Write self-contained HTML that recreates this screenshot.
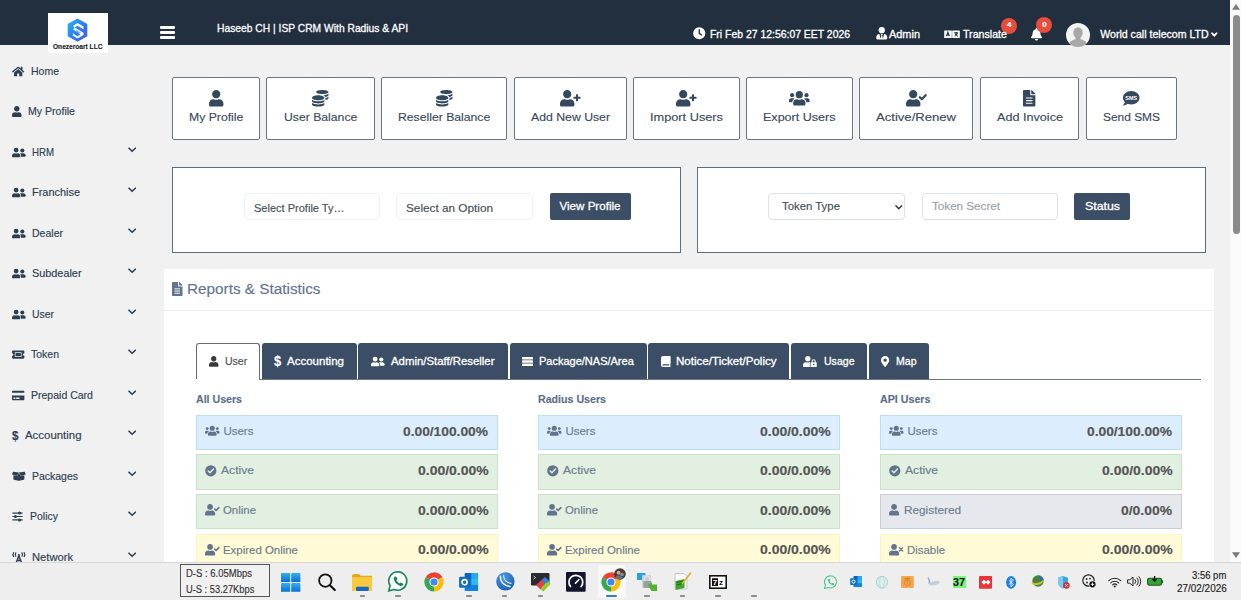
<!DOCTYPE html>
<html><head><meta charset="utf-8"><title>ISP CRM With Radius &amp; API</title>
<style>
*{box-sizing:border-box;margin:0;padding:0}
html,body{width:1241px;height:600px;overflow:hidden;background:#f1f1f1;font-family:"Liberation Sans",sans-serif;color:#2c3e50}
body{position:relative}
.t{position:absolute;white-space:nowrap;transform-origin:0 50%;display:block;-webkit-text-stroke:0.15px currentColor}
.b{position:absolute}
svg{position:absolute;overflow:visible}
.qb{position:absolute;top:77px;height:63px;background:#fff;border:1px solid #6b7581;border-radius:2px}
.panel{position:absolute;top:167px;height:86px;background:#fff;border:1px solid #626d7a}
.inp{position:absolute;top:193px;height:27px;background:#fff;border:1px solid #eff0f2;border-radius:4px}
.btn{position:absolute;top:193px;height:27px;background:#3b4e65;border-radius:2px}
.tab{position:absolute;top:343px;height:36.3px;background:#3b4e65;border-radius:3px 3px 0 0}
.row{position:absolute;width:302px;height:35.4px;border:1px solid}
.r1{background:#dcedfd;border-color:#bcdcfa}
.r2{background:#e1f0e1;border-color:#c9e3c9}
.r3{background:#fffbd7;border-color:#fdf3c0}
.r4{background:#e5e9ee;border-color:#c9ced6}
</style></head><body>
<div class="b" style="left:0px;top:0px;width:1230px;height:45px;background:#222f3f;"></div>
<div class="b" style="left:48px;top:12.8px;width:60.3px;height:40.2px;background:#fff;"></div>
<svg style="left:67.4px;top:18px" width="21" height="24.2" viewBox="0 0 44 52"><defs><linearGradient id="lg" x1="0" y1="0" x2="1" y2="1"><stop offset="0" stop-color="#25b4f8"/><stop offset=".55" stop-color="#2b7bf2"/><stop offset="1" stop-color="#4454ee"/></linearGradient></defs><path d="M22 1L43 13v26L22 51 1 39V13z" fill="url(#lg)"/><path d="M12 17l10-6 13 7.500v5.500l-13-7.500-5 3v2.500z" fill="#fff"/><path d="M12 24l5-3 18 10.500v5l-13 7.500-10-6v-5l10 6 6-3.500z" fill="#fff" opacity=".95"/><path d="M19 25.500l10 5.800-4 2.300-6-3.500z" fill="#2b6cf0" opacity=".55"/></svg>
<div class="b" style="left:160px;top:26.3px;width:14.5px;height:3px;background:#fff;border-radius:1px;"></div>
<div class="b" style="left:160px;top:31.3px;width:14.5px;height:3px;background:#fff;border-radius:1px;"></div>
<div class="b" style="left:160px;top:36.3px;width:14.5px;height:3px;background:#fff;border-radius:1px;"></div>
<svg style="left:693px;top:27.2px" width="12.5" height="12.5" viewBox="0 0 512 512" preserveAspectRatio="xMidYMid meet"><circle cx="256" cy="256" r="248" fill="#ffffff"/><path fill="none" stroke="#222f3f" stroke-width="56" stroke-linecap="round" stroke-linejoin="round" d="M256 110v150l90 66"/></svg>
<svg style="left:875.5px;top:27px" width="11.5" height="12.5" viewBox="0 0 448 512" preserveAspectRatio="xMidYMid meet"><circle cx="224" cy="128" r="128" fill="#ffffff"/><path fill="#ffffff" d="M320 289l-48 191-32-136 32-56h-96l32 56-32 136-48-191C57 292 0 351 0 422v42c0 27 22 48 48 48h352c27 0 48-21 48-48v-42c0-71-57-130-128-133z"/></svg>
<svg style="left:944px;top:27.5px" width="16" height="12.5" viewBox="0 0 640 512" preserveAspectRatio="xMidYMid meet"><rect x="0" y="104" width="312" height="304" rx="24" fill="#ffffff"/><rect x="328" y="104" width="312" height="304" rx="24" fill="#ffffff"/><path fill="none" stroke="#222f3f" stroke-width="44" d="M92 340l60-170 60 170M112 290h80M410 200h160M490 160v40M430 340c60-30 100-80 110-140M450 240c20 50 60 80 110 100"/></svg>
<div class="b" style="left:1001px;top:17.5px;width:16px;height:16px;background:#e74c3c;border-radius:50%;"></div>
<svg style="left:1031px;top:28px" width="11" height="12.5" viewBox="0 0 448 512" preserveAspectRatio="xMidYMid meet"><path fill="#ffffff" d="M224 512c35 0 64-29 64-64H160c0 35 29 64 64 64zm215-150c-19-21-55-52-55-154 0-77-54-139-127-154V32c0-18-14-32-32-32s-32 14-32 32v22c-73 15-127 77-127 154 0 102-36 133-55 154-6 6-9 14-9 22 0 16 13 32 32 32h383c19 0 32-16 32-32 0-8-3-16-9-22z"/></svg>
<div class="b" style="left:1036.2px;top:17px;width:16px;height:16px;background:#e74c3c;border-radius:50%;"></div>
<svg style="left:1065.8px;top:23px" width="24" height="24" viewBox="0 0 24 24"><clipPath id="av"><circle cx="12" cy="12" r="12"/></clipPath><circle cx="12" cy="12" r="12" fill="#f3f3f3"/><g clip-path="url(#av)" fill="#a8a8a8"><ellipse cx="12" cy="9.800" rx="4.700" ry="5.600"/><path d="M9.500 13h5v3.200c3.500.600 6 2.300 6.500 5.300V26H3v-4.500c.500-3 3-4.700 6.500-5.300z"/></g></svg>
<svg style="left:1211.2px;top:31.8px" width="6.6" height="5.4" viewBox="0 0 6.6 5.4"><path d="M1.100 1.300L3.300 3.700 5.500 1.300" fill="none" stroke="#fff" stroke-width="1.900" stroke-linecap="round" stroke-linejoin="round"/></svg>
<div class="b" style="left:1230px;top:0px;width:11px;height:563px;background:#fafafa;"></div>
<div class="b" style="left:1232.6px;top:14.5px;width:7.1px;height:219.5px;background:#8b8b8b;border-radius:3.5px;"></div>
<svg style="left:1232px;top:4px" width="8" height="6" viewBox="0 0 8 6"><path d="M4 0L8 5.800H0z" fill="#7a7a7a"/></svg>
<svg style="left:1232.3px;top:552px" width="8" height="6" viewBox="0 0 8 6"><path d="M4 6L8 .2H0z" fill="#7a7a7a"/></svg>
<svg style="left:12.0px;top:65.5px" width="12.38" height="11" viewBox="0 0 576 512"><path fill="#2c3e50" d="M280 148L96 300v164c0 9 7 16 16 16l112-0c9 0 16-7 16-16v-96c0-9 7-16 16-16h64c9 0 16 7 16 16v96c0 9 7 16 16 16l112 0c9 0 16-7 16-16V300L296 148c-5-4-11-4-16 0zM572 251l-84-69V44c0-7-5-12-12-12h-56c-7 0-12 5-12 12v73l-90-74c-18-15-43-15-61 0L4 251c-5 4-6 12-2 17l26 31c4 5 12 6 17 2L280 107c5-4 11-4 16 0l235 194c5 4 13 3 17-2l26-31c4-5 3-13-2-17z"/></svg>
<svg style="left:12.0px;top:106.0px" width="9.62" height="11" viewBox="0 0 448 512"><path fill="#2c3e50" d="M224 256c70.7 0 128-57.3 128-128S294.7 0 224 0 96 57.3 96 128s57.3 128 128 128zm89.6 32h-16.700c-22.200 10.200-46.900 16-72.900 16s-50.600-5.800-72.900-16h-16.700C60.200 288 0 348.200 0 422.400V464c0 26.500 21.500 48 48 48h352c26.500 0 48-21.500 48-48v-41.600c0-74.200-60.200-134.400-134.400-134.400z"/></svg>
<svg style="left:12.0px;top:146.5px" width="13.75" height="11" viewBox="0 0 640 512"><circle cx="192" cy="144" r="112" fill="#2c3e50"/><path fill="#2c3e50" d="M269 288h-8c-21 10-44 16-69 16s-48-6-69-16h-8C51 288 0 340 0 403v29c0 27 22 48 48 48h288c27 0 48-21 48-48v-29c0-63-51-115-115-115z"/><circle cx="480" cy="160" r="96" fill="#2c3e50"/><path fill="#2c3e50" d="M528 288h-4c-14 5-29 8-44 8s-30-3-44-8h-4c-20 0-39 6-55 15 24 26 39 61 39 100v38c0 2 0 4-1 7h177c27 0 48-21 48-48 0-62-50-112-112-112z"/></svg>
<svg style="left:127.5px;top:144.6px" width="8.31" height="9.5" viewBox="0 0 448 512"><path fill="none" stroke="#2c3e50" stroke-width="84" stroke-linecap="round" stroke-linejoin="round" d="M52 172l172 168 172-168"/></svg>
<svg style="left:12.0px;top:187.0px" width="13.75" height="11" viewBox="0 0 640 512"><circle cx="192" cy="144" r="112" fill="#2c3e50"/><path fill="#2c3e50" d="M269 288h-8c-21 10-44 16-69 16s-48-6-69-16h-8C51 288 0 340 0 403v29c0 27 22 48 48 48h288c27 0 48-21 48-48v-29c0-63-51-115-115-115z"/><circle cx="480" cy="160" r="96" fill="#2c3e50"/><path fill="#2c3e50" d="M528 288h-4c-14 5-29 8-44 8s-30-3-44-8h-4c-20 0-39 6-55 15 24 26 39 61 39 100v38c0 2 0 4-1 7h177c27 0 48-21 48-48 0-62-50-112-112-112z"/></svg>
<svg style="left:127.5px;top:185.1px" width="8.31" height="9.5" viewBox="0 0 448 512"><path fill="none" stroke="#2c3e50" stroke-width="84" stroke-linecap="round" stroke-linejoin="round" d="M52 172l172 168 172-168"/></svg>
<svg style="left:12.0px;top:227.5px" width="13.75" height="11" viewBox="0 0 640 512"><circle cx="192" cy="144" r="112" fill="#2c3e50"/><path fill="#2c3e50" d="M269 288h-8c-21 10-44 16-69 16s-48-6-69-16h-8C51 288 0 340 0 403v29c0 27 22 48 48 48h288c27 0 48-21 48-48v-29c0-63-51-115-115-115z"/><circle cx="480" cy="160" r="96" fill="#2c3e50"/><path fill="#2c3e50" d="M528 288h-4c-14 5-29 8-44 8s-30-3-44-8h-4c-20 0-39 6-55 15 24 26 39 61 39 100v38c0 2 0 4-1 7h177c27 0 48-21 48-48 0-62-50-112-112-112z"/></svg>
<svg style="left:127.5px;top:225.6px" width="8.31" height="9.5" viewBox="0 0 448 512"><path fill="none" stroke="#2c3e50" stroke-width="84" stroke-linecap="round" stroke-linejoin="round" d="M52 172l172 168 172-168"/></svg>
<svg style="left:12.0px;top:268.0px" width="13.75" height="11" viewBox="0 0 640 512"><circle cx="192" cy="144" r="112" fill="#2c3e50"/><path fill="#2c3e50" d="M269 288h-8c-21 10-44 16-69 16s-48-6-69-16h-8C51 288 0 340 0 403v29c0 27 22 48 48 48h288c27 0 48-21 48-48v-29c0-63-51-115-115-115z"/><circle cx="480" cy="160" r="96" fill="#2c3e50"/><path fill="#2c3e50" d="M528 288h-4c-14 5-29 8-44 8s-30-3-44-8h-4c-20 0-39 6-55 15 24 26 39 61 39 100v38c0 2 0 4-1 7h177c27 0 48-21 48-48 0-62-50-112-112-112z"/></svg>
<svg style="left:127.5px;top:266.1px" width="8.31" height="9.5" viewBox="0 0 448 512"><path fill="none" stroke="#2c3e50" stroke-width="84" stroke-linecap="round" stroke-linejoin="round" d="M52 172l172 168 172-168"/></svg>
<svg style="left:12.0px;top:308.5px" width="13.75" height="11" viewBox="0 0 640 512"><circle cx="192" cy="144" r="112" fill="#2c3e50"/><path fill="#2c3e50" d="M269 288h-8c-21 10-44 16-69 16s-48-6-69-16h-8C51 288 0 340 0 403v29c0 27 22 48 48 48h288c27 0 48-21 48-48v-29c0-63-51-115-115-115z"/><circle cx="480" cy="160" r="96" fill="#2c3e50"/><path fill="#2c3e50" d="M528 288h-4c-14 5-29 8-44 8s-30-3-44-8h-4c-20 0-39 6-55 15 24 26 39 61 39 100v38c0 2 0 4-1 7h177c27 0 48-21 48-48 0-62-50-112-112-112z"/></svg>
<svg style="left:127.5px;top:306.6px" width="8.31" height="9.5" viewBox="0 0 448 512"><path fill="none" stroke="#2c3e50" stroke-width="84" stroke-linecap="round" stroke-linejoin="round" d="M52 172l172 168 172-168"/></svg>
<svg style="left:12.0px;top:349.0px" width="12.38" height="11" viewBox="0 0 576 512"><path fill="#2c3e50" fill-rule="evenodd" d="M0 112c0-26 22-48 48-48h480c26 0 48 22 48 48v80c-35 0-64 29-64 64s29 64 64 64v80c0 26-22 48-48 48H48c-26 0-48-22-48-48v-80c35 0 64-29 64-64s-29-64-64-64zM128 152v208h320V152zM164 188h248v136H164z"/></svg>
<svg style="left:127.5px;top:347.1px" width="8.31" height="9.5" viewBox="0 0 448 512"><path fill="none" stroke="#2c3e50" stroke-width="84" stroke-linecap="round" stroke-linejoin="round" d="M52 172l172 168 172-168"/></svg>
<svg style="left:12.0px;top:389.5px" width="12.38" height="11" viewBox="0 0 576 512"><path fill="#2c3e50" d="M0 432c0 27 22 48 48 48h480c27 0 48-21 48-48V256H0v176zm192-68c0-7 5-12 12-12h136c7 0 12 5 12 12v40c0 7-5 12-12 12H204c-7 0-12-5-12-12v-40zm-128 0c0-7 5-12 12-12h72c7 0 12 5 12 12v40c0 7-5 12-12 12H76c-7 0-12-5-12-12v-40zM576 80v48H0V80c0-27 22-48 48-48h480c27 0 48 21 48 48z"/></svg>
<svg style="left:127.5px;top:387.6px" width="8.31" height="9.5" viewBox="0 0 448 512"><path fill="none" stroke="#2c3e50" stroke-width="84" stroke-linecap="round" stroke-linejoin="round" d="M52 172l172 168 172-168"/></svg>
<svg style="left:127.5px;top:428.1px" width="8.31" height="9.5" viewBox="0 0 448 512"><path fill="none" stroke="#2c3e50" stroke-width="84" stroke-linecap="round" stroke-linejoin="round" d="M52 172l172 168 172-168"/></svg>
<svg style="left:12.0px;top:470.5px" width="13.75" height="11" viewBox="0 0 640 512"><path fill="#2c3e50" d="M425 233c-12 0-24-6-30-17L320 92l-75 124c-6 11-18 17-30 17-3 0-7 0-10-1L64 192v182c0 15 10 28 24 31l216 54c10 3 21 3 31 0l216-54c14-4 24-16 24-31V192l-141 40c-3 1-6 1-10 1zM638 143L587 40c-3-6-10-10-17-9L320 64l92 152c4 6 11 9 18 7l198-57c10-3 15-14 10-23zM53 40L2 143c-5 9 0 20 10 23l198 57c7 2 14-1 18-7l92-152L70 32c-7-1-13 3-17 8z"/></svg>
<svg style="left:127.5px;top:468.6px" width="8.31" height="9.5" viewBox="0 0 448 512"><path fill="none" stroke="#2c3e50" stroke-width="84" stroke-linecap="round" stroke-linejoin="round" d="M52 172l172 168 172-168"/></svg>
<svg style="left:12.0px;top:511.0px" width="11.00" height="11" viewBox="0 0 512 512"><path stroke="#2c3e50" stroke-width="56" stroke-linecap="round" d="M36 96h440M36 256h440M36 416h440"/><path stroke="#2c3e50" stroke-width="140" stroke-linecap="round" d="M352 96h1M160 256h1M352 416h1" /></svg>
<svg style="left:127.5px;top:509.0px" width="8.31" height="9.5" viewBox="0 0 448 512"><path fill="none" stroke="#2c3e50" stroke-width="84" stroke-linecap="round" stroke-linejoin="round" d="M52 172l172 168 172-168"/></svg>
<svg style="left:11.8px;top:552.0px" width="13.75" height="11" viewBox="0 0 640 512"><circle cx="320" cy="140" r="50" fill="#2c3e50"/><path fill="none" stroke="#2c3e50" stroke-width="70" stroke-linecap="round" stroke-linejoin="round" d="M196 500L320 170l124 330M246 400h148"/><path fill="none" stroke="#2c3e50" stroke-width="56" stroke-linecap="round" d="M176 40c-30 52-30 106 0 158M464 40c30 52 30 106 0 158M76 30c-44 66-44 118 0 184M564 30c44 66 44 118 0 184"/></svg>
<svg style="left:127.5px;top:549.5px" width="8.31" height="9.5" viewBox="0 0 448 512"><path fill="none" stroke="#2c3e50" stroke-width="84" stroke-linecap="round" stroke-linejoin="round" d="M52 172l172 168 172-168"/></svg>
<div class="qb" style="left:172px;width:88px"></div>
<svg style="left:208.8px;top:89.8px" width="14.44" height="16.5" viewBox="0 0 448 512"><path fill="#34495e" d="M224 256c70.7 0 128-57.3 128-128S294.7 0 224 0 96 57.3 96 128s57.3 128 128 128zm89.6 32h-16.700c-22.200 10.200-46.900 16-72.900 16s-50.600-5.800-72.900-16h-16.700C60.200 288 0 348.200 0 422.400V464c0 26.500 21.500 48 48 48h352c26.500 0 48-21.500 48-48v-41.600c0-74.200-60.200-134.400-134.400-134.400z"/></svg>
<div class="qb" style="left:266px;width:109px"></div>
<svg style="left:312.2px;top:89.8px" width="16.50" height="16.5" viewBox="0 0 512 512"><path fill="#34495e" d="M0 405v43c0 35 86 64 192 64s192-29 192-64v-43c-41 29-117 43-192 43S41 434 0 405zM320 128c106 0 192-29 192-64S426 0 320 0 128 29 128 64s86 64 192 64zM0 300v52c0 35 86 64 192 64s192-29 192-64v-52c-41 34-117 52-192 52S41 334 0 300zm416 11c57-11 96-32 96-55v-43c-23 16-57 28-96 35v63zM192 160C86 160 0 196 0 240s86 80 192 80 192-36 192-80-86-80-192-80zm219 56c60-11 101-32 101-56v-43c-35 25-96 39-160 42 29 14 51 33 59 57z"/></svg>
<div class="qb" style="left:381px;width:126px"></div>
<svg style="left:435.8px;top:89.8px" width="16.50" height="16.5" viewBox="0 0 512 512"><path fill="#34495e" d="M0 405v43c0 35 86 64 192 64s192-29 192-64v-43c-41 29-117 43-192 43S41 434 0 405zM320 128c106 0 192-29 192-64S426 0 320 0 128 29 128 64s86 64 192 64zM0 300v52c0 35 86 64 192 64s192-29 192-64v-52c-41 34-117 52-192 52S41 334 0 300zm416 11c57-11 96-32 96-55v-43c-23 16-57 28-96 35v63zM192 160C86 160 0 196 0 240s86 80 192 80 192-36 192-80-86-80-192-80zm219 56c60-11 101-32 101-56v-43c-35 25-96 39-160 42 29 14 51 33 59 57z"/></svg>
<div class="qb" style="left:514px;width:113px"></div>
<svg style="left:560.2px;top:89.8px" width="20.62" height="16.5" viewBox="0 0 640 512"><path fill="#34495e" d="M224 256c70.7 0 128-57.3 128-128S294.7 0 224 0 96 57.3 96 128s57.3 128 128 128zm89.6 32h-16.700c-22.200 10.200-46.900 16-72.900 16s-50.600-5.800-72.900-16h-16.700C60.200 288 0 348.200 0 422.400V464c0 26.500 21.500 48 48 48h352c26.500 0 48-21.500 48-48v-41.600c0-74.200-60.200-134.400-134.400-134.400z"/><path fill="#34495e" d="M624 208h-64v-64c0-8.800-7.200-16-16-16h-32c-8.800 0-16 7.200-16 16v64h-64c-8.800 0-16 7.200-16 16v32c0 8.800 7.200 16 16 16h64v64c0 8.800 7.200 16 16 16h32c8.800 0 16-7.200 16-16v-64h64c8.800 0 16-7.200 16-16v-32c0-8.800-7.200-16-16-16z"/></svg>
<div class="qb" style="left:633px;width:107px"></div>
<svg style="left:676.2px;top:89.8px" width="20.62" height="16.5" viewBox="0 0 640 512"><path fill="#34495e" d="M224 256c70.7 0 128-57.3 128-128S294.7 0 224 0 96 57.3 96 128s57.3 128 128 128zm89.6 32h-16.700c-22.200 10.200-46.900 16-72.900 16s-50.600-5.800-72.900-16h-16.700C60.200 288 0 348.200 0 422.400V464c0 26.500 21.500 48 48 48h352c26.500 0 48-21.500 48-48v-41.600c0-74.200-60.200-134.400-134.400-134.400z"/><path fill="#34495e" d="M624 208h-64v-64c0-8.800-7.200-16-16-16h-32c-8.800 0-16 7.200-16 16v64h-64c-8.800 0-16 7.200-16 16v32c0 8.800 7.200 16 16 16h64v64c0 8.800 7.200 16 16 16h32c8.800 0 16-7.200 16-16v-64h64c8.800 0 16-7.200 16-16v-32c0-8.800-7.200-16-16-16z"/></svg>
<div class="qb" style="left:746px;width:107px"></div>
<svg style="left:789.2px;top:89.8px" width="20.62" height="16.5" viewBox="0 0 640 512"><circle cx="96" cy="160" r="64" fill="#34495e"/><circle cx="544" cy="160" r="64" fill="#34495e"/><circle cx="320" cy="144" r="112" fill="#34495e"/><path fill="#34495e" d="M576 256h-64c-18 0-34 7-45 19 40 22 69 62 75 109h66c18 0 32-14 32-32v-32c0-35-29-64-64-64zM128 256H64c-35 0-64 29-64 64v32c0 18 14 32 32 32h66c6-47 35-87 75-109-11-12-27-19-45-19zM397 288h-8c-21 10-44 16-69 16s-48-6-69-16h-8c-64 0-115 52-115 115v29c0 27 22 48 48 48h288c27 0 48-21 48-48v-29c0-63-51-115-115-115z"/></svg>
<div class="qb" style="left:859px;width:114px"></div>
<svg style="left:905.7px;top:89.8px" width="20.62" height="16.5" viewBox="0 0 640 512"><path fill="#34495e" d="M224 256c70.7 0 128-57.3 128-128S294.7 0 224 0 96 57.3 96 128s57.3 128 128 128zm89.6 32h-16.700c-22.200 10.200-46.900 16-72.900 16s-50.600-5.800-72.900-16h-16.700C60.200 288 0 348.200 0 422.400V464c0 26.500 21.500 48 48 48h352c26.500 0 48-21.500 48-48v-41.600c0-74.200-60.200-134.400-134.400-134.400z"/><path fill="none" stroke="#34495e" stroke-width="70" stroke-linecap="round" stroke-linejoin="round" d="M430 226l62 62 118-128"/></svg>
<div class="qb" style="left:980px;width:99px"></div>
<svg style="left:1023.3px;top:89.8px" width="12.38" height="16.5" viewBox="0 0 384 512"><path fill="#34495e" d="M224 136V0H24C11 0 0 11 0 24v464c0 13 11 24 24 24h336c13 0 24-11 24-24V160H248c-13 0-24-11-24-24zm160-14v6H256V0h6c6 0 12 3 17 7l98 98c4 5 7 11 7 17z"/><path stroke="#fff" stroke-width="34" d="M90 250h204M90 330h204M90 410h204"/></svg>
<div class="qb" style="left:1086px;width:91px"></div>
<svg style="left:1123.2px;top:89.8px" width="16.50" height="16.5" viewBox="0 0 512 512"><path fill="#34495e" d="M256 32C115 32 0 125 0 240c0 50 21 95 57 131-12 50-54 95-55 96-2 2-3 6-1 9s4 4 7 4c66 0 116-32 141-52 33 12 69 20 107 20 141 0 256-93 256-208S397 32 256 32z"/><text x="256" y="300" font-family="Liberation Sans, sans-serif" font-size="170" font-weight="bold" fill="#fff" text-anchor="middle">SMS</text></svg>
<div class="panel" style="left:172px;width:509px"></div>
<div class="panel" style="left:697px;width:509px"></div>
<div class="inp" style="left:243.5px;width:136.5px"></div>
<div class="inp" style="left:396px;width:137px"></div>
<div class="btn" style="left:549.5px;width:81.5px"></div>
<div class="inp" style="left:768px;width:137px;border-color:#dde0e4"></div>
<svg style="left:894.5px;top:203px" width="7.5" height="8.5" viewBox="0 0 448 512" preserveAspectRatio="xMidYMid meet"><path fill="none" stroke="#333" stroke-width="84" stroke-linecap="round" stroke-linejoin="round" d="M52 172l172 168 172-168"/></svg>
<div class="inp" style="left:921.5px;width:136.5px;border-color:#dde0e4"></div>
<div class="btn" style="left:1074px;width:56px"></div>
<div class="b" style="left:164px;top:269px;width:1050px;height:294px;background:#fff;"></div>
<div class="b" style="left:164px;top:310px;width:1050px;height:1px;background:#ededed;"></div>
<svg style="left:172px;top:281.5px" width="10.5" height="14" viewBox="0 0 384 512" preserveAspectRatio="xMidYMid meet"><path fill="#62748e" d="M224 136V0H24C11 0 0 11 0 24v464c0 13 11 24 24 24h336c13 0 24-11 24-24V160H248c-13 0-24-11-24-24zm160-14v6H256V0h6c6 0 12 3 17 7l98 98c4 5 7 11 7 17z"/><path stroke="#fff" stroke-width="34" d="M90 250h204M90 330h204M90 410h204"/></svg>
<div class="b" style="left:259px;top:379px;width:942px;height:1.3px;background:#6b7684;"></div>
<div class="tab" style="left:196px;width:63.800px;background:#fff;border:1px solid #656c75;border-bottom:none"></div>
<svg style="left:208.7px;top:355.8px" width="9.45" height="10.8" viewBox="0 0 448 512"><path fill="#3a3a3a" d="M224 256c70.7 0 128-57.3 128-128S294.7 0 224 0 96 57.3 96 128s57.3 128 128 128zm89.6 32h-16.700c-22.200 10.200-46.900 16-72.900 16s-50.600-5.800-72.900-16h-16.700C60.200 288 0 348.200 0 422.400V464c0 26.500 21.500 48 48 48h352c26.500 0 48-21.500 48-48v-41.600c0-74.200-60.200-134.400-134.400-134.400z"/></svg>
<div class="tab" style="left:262px;width:94.5px"></div>
<div class="tab" style="left:358px;width:149.5px"></div>
<svg style="left:370.5px;top:355.5px" width="13.75" height="11" viewBox="0 0 640 512"><circle cx="192" cy="144" r="112" fill="#ffffff"/><path fill="#ffffff" d="M269 288h-8c-21 10-44 16-69 16s-48-6-69-16h-8C51 288 0 340 0 403v29c0 27 22 48 48 48h288c27 0 48-21 48-48v-29c0-63-51-115-115-115z"/><circle cx="480" cy="160" r="96" fill="#ffffff"/><path fill="#ffffff" d="M528 288h-4c-14 5-29 8-44 8s-30-3-44-8h-4c-20 0-39 6-55 15 24 26 39 61 39 100v38c0 2 0 4-1 7h177c27 0 48-21 48-48 0-62-50-112-112-112z"/></svg>
<div class="tab" style="left:509.5px;width:137.0px"></div>
<svg style="left:521.5px;top:355.5px" width="11.00" height="11" viewBox="0 0 512 512"><rect x="0" y="48" width="512" height="112" rx="24" fill="#ffffff"/><rect x="0" y="200" width="512" height="112" rx="24" fill="#ffffff"/><rect x="0" y="352" width="512" height="112" rx="24" fill="#ffffff"/></svg>
<div class="tab" style="left:648px;width:141px"></div>
<svg style="left:660.5px;top:355.5px" width="9.62" height="11" viewBox="0 0 448 512"><path fill="#ffffff" d="M448 360V24c0-13-11-24-24-24H96C43 0 0 43 0 96v320c0 53 43 96 96 96h328c13 0 24-11 24-24v-16c0-8-4-14-9-19-4-15-4-59 0-74 5-4 9-11 9-19zM381 448H96c-18 0-32-14-32-32s14-32 32-32h285c-2 17-2 47 0 64z"/></svg>
<div class="tab" style="left:791px;width:75.5px"></div>
<svg style="left:803.0px;top:355.5px" width="13.75" height="11" viewBox="0 0 640 512"><path fill="#ffffff" d="M224 256c70.7 0 128-57.3 128-128S294.7 0 224 0 96 57.3 96 128s57.3 128 128 128zm96 64c0-11 3-21 8-30-5-1-10-2-14-2h-17c-22 10-47 16-73 16s-51-6-73-16h-17C60 288 0 348 0 422v42c0 27 22 48 48 48h280c-5-9-8-20-8-32z"/><rect fill="#ffffff" x="352" y="288" width="288" height="224" rx="40"/><path fill="none" stroke="#ffffff" stroke-width="48" d="M424 300v-50a72 72 0 0 1 144 0v50"/><circle cx="496" cy="400" r="36" fill="#34495e"/></svg>
<div class="tab" style="left:868.5px;width:60.0px"></div>
<svg style="left:881.0px;top:355.5px" width="8.25" height="11" viewBox="0 0 384 512"><path fill="#ffffff" fill-rule="evenodd" d="M172 502C27 291 0 270 0 192 0 86 86 0 192 0s192 86 192 192c0 78-27 99-172 310-10 13-30 13-40 0zM192 272a80 80 0 1 0 0-160 80 80 0 0 0 0 160z"/></svg>
<div class="row r1" style="left:196px;top:415px"></div>
<svg style="left:204.8px;top:425.2px" width="14.50" height="11.6" viewBox="0 0 640 512"><circle cx="96" cy="160" r="64" fill="#62748c"/><circle cx="544" cy="160" r="64" fill="#62748c"/><circle cx="320" cy="144" r="112" fill="#62748c"/><path fill="#62748c" d="M576 256h-64c-18 0-34 7-45 19 40 22 69 62 75 109h66c18 0 32-14 32-32v-32c0-35-29-64-64-64zM128 256H64c-35 0-64 29-64 64v32c0 18 14 32 32 32h66c6-47 35-87 75-109-11-12-27-19-45-19zM397 288h-8c-21 10-44 16-69 16s-48-6-69-16h-8c-64 0-115 52-115 115v29c0 27 22 48 48 48h288c27 0 48-21 48-48v-29c0-63-51-115-115-115z"/></svg>
<div class="row r2" style="left:196px;top:454.4px"></div>
<svg style="left:204.8px;top:464.6px" width="11.60" height="11.6" viewBox="0 0 512 512"><circle cx="256" cy="256" r="248" fill="#62748c"/><path fill="none" stroke="#e1f0e1" stroke-width="64" stroke-linecap="round" stroke-linejoin="round" d="M140 262l80 80 152-160"/></svg>
<div class="row r2" style="left:196px;top:494px"></div>
<svg style="left:204.8px;top:504.2px" width="14.50" height="11.6" viewBox="0 0 640 512"><path fill="#62748c" d="M224 256c70.7 0 128-57.3 128-128S294.7 0 224 0 96 57.3 96 128s57.3 128 128 128zm89.6 32h-16.700c-22.200 10.200-46.900 16-72.900 16s-50.600-5.800-72.900-16h-16.700C60.200 288 0 348.200 0 422.400V464c0 26.500 21.500 48 48 48h352c26.500 0 48-21.500 48-48v-41.600c0-74.200-60.200-134.400-134.400-134.400z"/><path fill="none" stroke="#62748c" stroke-width="70" stroke-linecap="round" stroke-linejoin="round" d="M430 226l62 62 118-128"/></svg>
<div class="row r3" style="left:196px;top:533.6px"></div>
<svg style="left:204.8px;top:543.8px" width="14.50" height="11.6" viewBox="0 0 640 512"><path fill="#62748c" d="M224 256c70.7 0 128-57.3 128-128S294.7 0 224 0 96 57.3 96 128s57.3 128 128 128zm89.6 32h-16.700c-22.200 10.200-46.900 16-72.900 16s-50.600-5.800-72.900-16h-16.700C60.200 288 0 348.200 0 422.400V464c0 26.500 21.500 48 48 48h352c26.500 0 48-21.500 48-48v-41.600c0-74.200-60.200-134.400-134.400-134.400z"/><path fill="none" stroke="#62748c" stroke-width="70" stroke-linecap="round" stroke-linejoin="round" d="M430 226l62 62 118-128"/></svg>
<div class="row r1" style="left:538px;top:415px"></div>
<svg style="left:546.8px;top:425.2px" width="14.50" height="11.6" viewBox="0 0 640 512"><circle cx="96" cy="160" r="64" fill="#62748c"/><circle cx="544" cy="160" r="64" fill="#62748c"/><circle cx="320" cy="144" r="112" fill="#62748c"/><path fill="#62748c" d="M576 256h-64c-18 0-34 7-45 19 40 22 69 62 75 109h66c18 0 32-14 32-32v-32c0-35-29-64-64-64zM128 256H64c-35 0-64 29-64 64v32c0 18 14 32 32 32h66c6-47 35-87 75-109-11-12-27-19-45-19zM397 288h-8c-21 10-44 16-69 16s-48-6-69-16h-8c-64 0-115 52-115 115v29c0 27 22 48 48 48h288c27 0 48-21 48-48v-29c0-63-51-115-115-115z"/></svg>
<div class="row r2" style="left:538px;top:454.4px"></div>
<svg style="left:546.8px;top:464.6px" width="11.60" height="11.6" viewBox="0 0 512 512"><circle cx="256" cy="256" r="248" fill="#62748c"/><path fill="none" stroke="#e1f0e1" stroke-width="64" stroke-linecap="round" stroke-linejoin="round" d="M140 262l80 80 152-160"/></svg>
<div class="row r2" style="left:538px;top:494px"></div>
<svg style="left:546.8px;top:504.2px" width="14.50" height="11.6" viewBox="0 0 640 512"><path fill="#62748c" d="M224 256c70.7 0 128-57.3 128-128S294.7 0 224 0 96 57.3 96 128s57.3 128 128 128zm89.6 32h-16.700c-22.200 10.200-46.900 16-72.900 16s-50.600-5.800-72.900-16h-16.700C60.200 288 0 348.200 0 422.400V464c0 26.500 21.500 48 48 48h352c26.500 0 48-21.500 48-48v-41.600c0-74.200-60.200-134.400-134.400-134.400z"/><path fill="none" stroke="#62748c" stroke-width="70" stroke-linecap="round" stroke-linejoin="round" d="M430 226l62 62 118-128"/></svg>
<div class="row r3" style="left:538px;top:533.6px"></div>
<svg style="left:546.8px;top:543.8px" width="14.50" height="11.6" viewBox="0 0 640 512"><path fill="#62748c" d="M224 256c70.7 0 128-57.3 128-128S294.7 0 224 0 96 57.3 96 128s57.3 128 128 128zm89.6 32h-16.700c-22.200 10.200-46.900 16-72.900 16s-50.600-5.800-72.900-16h-16.700C60.200 288 0 348.200 0 422.400V464c0 26.500 21.500 48 48 48h352c26.500 0 48-21.500 48-48v-41.600c0-74.200-60.200-134.400-134.400-134.400z"/><path fill="none" stroke="#62748c" stroke-width="70" stroke-linecap="round" stroke-linejoin="round" d="M430 226l62 62 118-128"/></svg>
<div class="row r1" style="left:880px;top:415px"></div>
<svg style="left:888.8px;top:425.2px" width="14.50" height="11.6" viewBox="0 0 640 512"><circle cx="96" cy="160" r="64" fill="#62748c"/><circle cx="544" cy="160" r="64" fill="#62748c"/><circle cx="320" cy="144" r="112" fill="#62748c"/><path fill="#62748c" d="M576 256h-64c-18 0-34 7-45 19 40 22 69 62 75 109h66c18 0 32-14 32-32v-32c0-35-29-64-64-64zM128 256H64c-35 0-64 29-64 64v32c0 18 14 32 32 32h66c6-47 35-87 75-109-11-12-27-19-45-19zM397 288h-8c-21 10-44 16-69 16s-48-6-69-16h-8c-64 0-115 52-115 115v29c0 27 22 48 48 48h288c27 0 48-21 48-48v-29c0-63-51-115-115-115z"/></svg>
<div class="row r2" style="left:880px;top:454.4px"></div>
<svg style="left:888.8px;top:464.6px" width="11.60" height="11.6" viewBox="0 0 512 512"><circle cx="256" cy="256" r="248" fill="#62748c"/><path fill="none" stroke="#e1f0e1" stroke-width="64" stroke-linecap="round" stroke-linejoin="round" d="M140 262l80 80 152-160"/></svg>
<div class="row r4" style="left:880px;top:494px"></div>
<svg style="left:888.8px;top:504.2px" width="10.15" height="11.6" viewBox="0 0 448 512"><path fill="#62748c" d="M224 256c70.7 0 128-57.3 128-128S294.7 0 224 0 96 57.3 96 128s57.3 128 128 128zm89.6 32h-16.700c-22.200 10.200-46.900 16-72.900 16s-50.600-5.800-72.900-16h-16.700C60.200 288 0 348.200 0 422.400V464c0 26.500 21.500 48 48 48h352c26.500 0 48-21.500 48-48v-41.600c0-74.200-60.200-134.400-134.400-134.400z"/></svg>
<div class="row r3" style="left:880px;top:533.6px"></div>
<svg style="left:888.8px;top:543.8px" width="14.50" height="11.6" viewBox="0 0 640 512"><path fill="#62748c" d="M224 256c70.7 0 128-57.3 128-128S294.7 0 224 0 96 57.3 96 128s57.3 128 128 128zm89.6 32h-16.700c-22.200 10.200-46.900 16-72.900 16s-50.600-5.800-72.900-16h-16.700C60.200 288 0 348.200 0 422.400V464c0 26.500 21.500 48 48 48h352c26.500 0 48-21.500 48-48v-41.600c0-74.200-60.200-134.400-134.400-134.400z"/><path fill="none" stroke="#62748c" stroke-width="60" stroke-linecap="round" d="M460 170l140 140M600 170l-140 140"/></svg>
<div class="b" style="left:0px;top:561.7px;width:1241px;height:38.3px;background:#eeeeee;border-top:1.5px solid #d6d6d6;"></div>
<div class="b" style="left:180.3px;top:564px;width:90.2px;height:33.2px;background:#f1f1f1;border:1.3px solid #555;"></div>
<svg style="left:280.6px;top:573px" width="19.4" height="18.8" viewBox="0 0 194 188"><defs><linearGradient id="wg" x1="0" y1="0" x2="0" y2="1"><stop offset="0" stop-color="#35b0f5"/><stop offset="1" stop-color="#0a70d0"/></linearGradient></defs><g fill="url(#wg)"><rect x="0" y="0" width="92" height="89" rx="5"/><rect x="102" y="0" width="92" height="89" rx="5"/><rect x="0" y="99" width="92" height="89" rx="5"/><rect x="102" y="99" width="92" height="89" rx="5"/></g></svg>
<svg style="left:317px;top:572px" width="20" height="20" viewBox="0 0 20 20"><circle cx="8.300" cy="8.600" r="6.200" fill="none" stroke="#111" stroke-width="1.800"/><path d="M12.900 13.300L17.800 18" stroke="#111" stroke-width="2.2" stroke-linecap="round"/></svg>
<svg style="left:352px;top:573.5px" width="20" height="17" viewBox="0 0 20 17"><path d="M0 2.2C0 1 .9 0 2 0h5l1.6 1.8H20V16c0 .6-.4 1-1 1H1c-.6 0-1-.4-1-1z" fill="#e5a71c"/><path d="M0 4.2C0 3.500.5 3 1.200 3H18.800c.700 0 1.200.500 1.200 1.200V15.800c0 .700-.500 1.200-1.200 1.200H1.200C.500 17 0 16.500 0 15.800z" fill="#fbc93d"/><rect x="4" y="12.800" width="12.800" height="4.200" rx="1" fill="#1668c4"/></svg>
<svg style="left:387.8px;top:571.4px" width="20" height="21" viewBox="0 0 20 21"><path d="M10 .8a9.200 9.200 0 0 0-7.900 13.900L.8 19.800l5.300-1.300A9.200 9.200 0 1 0 10 .8z" fill="#ffffff" stroke="#17845a" stroke-width="1.600"/><path d="M6.600 5.600c.500-.500 1.300-.400 1.600.200l.700 1.500c.200.400.100.800-.200 1.100l-.600.600c.700 1.400 1.800 2.500 3.200 3.200l.600-.600c.300-.300.700-.400 1.100-.200l1.500.700c.600.300.700 1.100.200 1.600-.800.800-2 1.100-3.100.700-2.800-1-5-3.200-6-6-.400-1.100-.100-2.300.700-3.100z" fill="#17845a" transform="translate(0.300 0.300)"/></svg>
<svg style="left:423.5px;top:571.7px" width="20" height="20" viewBox="0 0 48 48"><circle cx="24" cy="24" r="23" fill="#fff"/><path d="M24 24L4.080 12.500A23 23 0 0 1 43.920 12.500z" fill="#ea4335"/><path d="M24 24L43.920 12.500A23 23 0 0 1 24 47z" fill="#fbbc05"/><path d="M24 24L24 47A23 23 0 0 1 4.080 12.500z" fill="#34a853"/><path d="M24 12.500H43.920A23 23 0 0 0 24 1z" fill="#ea4335"/><circle cx="24" cy="24" r="11" fill="#fff"/><circle cx="24" cy="24" r="8.600" fill="#4285f4"/></svg>
<svg style="left:458.8px;top:573px" width="19.2" height="18" viewBox="0 0 20 19"><rect x="6" y="0" width="14" height="19" rx="1.500" fill="#1490df"/><rect x="6" y="0" width="7" height="6.300" fill="#0a63c0"/><rect x="13" y="0" width="7" height="6.300" fill="#28a8ea"/><rect x="6" y="6.300" width="7" height="6.300" fill="#0f78d4"/><rect x="13" y="6.300" width="7" height="6.300" fill="#35b8f1"/><rect x="6" y="12.600" width="14" height="6.400" fill="#1383d9"/><rect x="0" y="4" width="11.500" height="11.500" rx="1.300" fill="#0f6cbd"/><circle cx="5.700" cy="9.700" r="2.700" fill="none" stroke="#fff" stroke-width="1.700"/></svg>
<svg style="left:495.6px;top:572px" width="18.8" height="18.8" viewBox="0 0 40 40"><defs><radialGradient id="wb" cx="0.400" cy="0.300" r="0.800"><stop offset="0" stop-color="#4f9be6"/><stop offset="1" stop-color="#1559b0"/></radialGradient></defs><circle cx="20" cy="20" r="19.500" fill="url(#wb)"/><path d="M9 9c0 12 8 21 21 22" fill="none" stroke="#fff" stroke-width="3" stroke-linecap="round"/><path d="M16 7c0 9 6 16 16 17" fill="none" stroke="#cfe4fb" stroke-width="2.600" stroke-linecap="round"/></svg>
<svg style="left:531px;top:573px" width="19" height="18.5" viewBox="0 0 19 18.500"><rect x="0" y="0" width="18.500" height="12.500" rx="1" fill="#2b2b2b"/><path d="M2.500 3l2 1.600-2 1.600" stroke="#ddd" stroke-width=".9" fill="none"/><path d="M5 12l5.500-5 3.500 3.500-4.500 6z" fill="#e8404a"/><path d="M10.500 7l3.500-3 4.500 4-4.500 3.500z" fill="#3b7de0"/><path d="M9.500 16.500l4.500-6 4.500-2.500v4l-6 6.500z" fill="#8bd52a"/></svg>
<svg style="left:566px;top:572px" width="19.7" height="19.7" viewBox="0 0 20 20"><rect width="20" height="20" rx="1" fill="#14152c"/><path d="M4.600 14.800a7 7 0 1 1 10.800 0" fill="none" stroke="#fff" stroke-width="1.700" stroke-linecap="round"/><path d="M9.600 11.400l3.400-3.600" stroke="#fff" stroke-width="1.600" stroke-linecap="round"/></svg>
<div class="b" style="left:597.5px;top:565px;width:28.5px;height:33px;background:#f8f8f8;border-radius:3px;"></div>
<svg style="left:601px;top:571.7px" width="20" height="20" viewBox="0 0 48 48"><circle cx="24" cy="24" r="23" fill="#fff"/><path d="M24 24L4.080 12.500A23 23 0 0 1 43.920 12.500z" fill="#ea4335"/><path d="M24 24L43.920 12.500A23 23 0 0 1 24 47z" fill="#fbbc05"/><path d="M24 24L24 47A23 23 0 0 1 4.080 12.500z" fill="#34a853"/><path d="M24 12.500H43.920A23 23 0 0 0 24 1z" fill="#ea4335"/><circle cx="24" cy="24" r="11" fill="#fff"/><circle cx="24" cy="24" r="8.600" fill="#4285f4"/></svg>
<svg style="left:613.7px;top:567.5px" width="12" height="12" viewBox="0 0 12 12"><circle cx="6" cy="6" r="5.800" fill="#4a3a33"/><circle cx="4.600" cy="4.800" r="2" fill="#c9a58c"/><circle cx="8" cy="6.500" r="1.800" fill="#7d94ad"/><path d="M1.500 9.500c1-2.500 4-3 5-1l3 .500c-1 2.500-5.500 3.500-8 .500z" fill="#5f6f86"/></svg>
<div class="b" style="left:606px;top:594.8px;width:11.3px;height:2.3px;background:#2b7cd8;border-radius:1.200px;"></div>
<svg style="left:637px;top:573px" width="20" height="19" viewBox="0 0 20 19"><rect x="0" y="0" width="8.500" height="7" fill="#2a9fe0"/><rect x="5" y="2" width="9" height="13" rx="1" fill="#c9ccd0"/><rect x="6.500" y="8" width="8" height="7" rx="1" fill="#9aa0a6"/><path d="M7.500 8V5.500a2.600 2.600 0 0 1 5.200 0V8" fill="none" stroke="#e4e6e8" stroke-width="1.400"/><path d="M11 12l4-2.500v2h5v6.500h-5.500z" fill="#4fb32b"/></svg>
<svg style="left:673px;top:572px" width="19" height="18.5" viewBox="0 0 19 18.500"><path d="M2 1.500h9l3 3v12.500H2z" fill="#fafafa" stroke="#b9beb9" stroke-width=".8"/><path d="M2.500 9l9-2v9l-9 2z" fill="#3fa62a"/><path d="M3.500 10.500l7-1.600M3.500 13l7-1.600" stroke="#1d6b17" stroke-width="1"/><path d="M9.500 11.500L17.500 1" stroke="#e0b13a" stroke-width="1.700" stroke-linecap="round"/></svg>
<svg style="left:709px;top:574.7px" width="18" height="14" viewBox="0 0 18 14"><rect x=".8" y=".8" width="16.400" height="12.400" fill="#fff" stroke="#111" stroke-width="1.600"/><rect x="3" y="3.200" width="6" height="7.800" fill="#111"/><text x="6" y="10.300" font-family="Liberation Sans, sans-serif" font-weight="bold" font-size="8" fill="#fff" text-anchor="middle">7</text><text x="12" y="10.300" font-family="Liberation Sans, sans-serif" font-weight="bold" font-size="8" fill="#111" text-anchor="middle">z</text></svg>
<div class="b" style="left:359.7px;top:595px;width:5.6px;height:1.6px;background:#8d8d8d;border-radius:.8px;"></div>
<div class="b" style="left:395.2px;top:595px;width:5.6px;height:1.6px;background:#8d8d8d;border-radius:.8px;"></div>
<div class="b" style="left:466.0px;top:595px;width:5.6px;height:1.6px;background:#8d8d8d;border-radius:.8px;"></div>
<div class="b" style="left:501.7px;top:595px;width:5.6px;height:1.6px;background:#8d8d8d;border-radius:.8px;"></div>
<div class="b" style="left:537.7px;top:595px;width:5.6px;height:1.6px;background:#8d8d8d;border-radius:.8px;"></div>
<div class="b" style="left:644.2px;top:595px;width:5.6px;height:1.6px;background:#8d8d8d;border-radius:.8px;"></div>
<div class="b" style="left:679.7px;top:595px;width:5.6px;height:1.6px;background:#8d8d8d;border-radius:.8px;"></div>
<div class="b" style="left:715.2px;top:595px;width:5.6px;height:1.6px;background:#8d8d8d;border-radius:.8px;"></div>
<div class="b" style="left:751.0px;top:595px;width:5.6px;height:1.6px;background:#8d8d8d;border-radius:.8px;"></div>
<svg style="left:823.6999999999999px;top:575.0px" width="13.4" height="14.4" viewBox="0 0 20 21"><path d="M10 .8a9.200 9.200 0 0 0-7.900 13.900L.8 19.800l5.300-1.300A9.200 9.200 0 1 0 10 .8z" fill="#eeeeee" stroke="#45c98a" stroke-width="1.600"/><path d="M6.600 5.600c.500-.500 1.300-.400 1.600.200l.700 1.500c.200.400.100.800-.200 1.100l-.600.600c.700 1.400 1.800 2.500 3.200 3.200l.600-.600c.300-.300.700-.400 1.100-.200l1.500.700c.600.300.700 1.100.200 1.600-.800.800-2 1.100-3.100.700-2.800-1-5-3.200-6-6-.400-1.100-.100-2.300.700-3.100z" fill="#45c98a" transform="translate(0.300 0.300)"/></svg>
<svg style="left:849.8px;top:576.4px" width="12" height="11" viewBox="0 0 20 19"><rect x="6" y="0" width="14" height="19" rx="1.500" fill="#1490df"/><rect x="6" y="0" width="7" height="6.300" fill="#0a63c0"/><rect x="13" y="0" width="7" height="6.300" fill="#28a8ea"/><rect x="6" y="6.300" width="7" height="6.300" fill="#0f78d4"/><rect x="13" y="6.300" width="7" height="6.300" fill="#35b8f1"/><rect x="6" y="12.600" width="14" height="6.400" fill="#1383d9"/><rect x="0" y="4" width="11.500" height="11.500" rx="1.300" fill="#0f6cbd"/><circle cx="5.700" cy="9.700" r="2.700" fill="none" stroke="#fff" stroke-width="1.700"/></svg>
<svg style="left:875.9px;top:575.9px" width="12" height="12.4" viewBox="0 0 12 12.400"><ellipse cx="6" cy="6.200" rx="5.600" ry="5.900" fill="#dfeced" stroke="#9fc9cf" stroke-width=".9"/><ellipse cx="6" cy="6.200" rx="2.400" ry="5.900" fill="none" stroke="#b5d5d9" stroke-width=".8"/></svg>
<svg style="left:901.3px;top:575.9px" width="12.8" height="11.9" viewBox="0 0 12.800 11.900"><rect width="12.800" height="11.900" rx="1" fill="#f5a64d"/><circle cx="6.400" cy="6.500" r="3" fill="none" stroke="#d9842a" stroke-width="1"/><path d="M6.400 1.500v6M3.500 2.500h5.800" stroke="#d9842a" stroke-width="1"/></svg>
<svg style="left:927px;top:576px" width="13.5" height="11" viewBox="0 0 13.500 11"><path d="M1 1.500c1 2 1.500 3 2 5l5-1.500c2-.500 4 0 5 1-1 2-4 3.500-8 3.500-2 0-3.500-1-4-2.500z" fill="#c9ced3"/><path d="M1 1.500c1 2 1.500 3 2 5" stroke="#7fb2d9" stroke-width="1.200" fill="none"/></svg>
<div class="b" style="left:952.5px;top:576px;width:13.6px;height:11.8px;background:#7ef17e;"></div>
<svg style="left:979px;top:575.5px" width="13" height="12.7" viewBox="0 0 13 12.700"><rect width="13" height="12.700" rx=".8" fill="#e8343b"/><path d="M2.500 6.300L5 3.800l2.500 2.500L5 8.800z" fill="#fff"/><path d="M6.500 6.300L9 3.800l2.500 2.500L9 8.800z" fill="#fff"/></svg>
<svg style="left:1005.8px;top:575.5px" width="10.2" height="12.7" viewBox="0 0 10.200 12.700"><ellipse cx="5.100" cy="6.350" rx="5" ry="6.300" fill="#1b7ce3"/><path d="M2.800 4.200l4.600 4.300-2.400 2.200V2l2.400 2.200-4.600 4.300" fill="none" stroke="#fff" stroke-width=".9" stroke-linejoin="round"/></svg>
<svg style="left:1031px;top:575px" width="13.2" height="12.7" viewBox="0 0 13.200 12.700"><circle cx="7" cy="6" r="5.700" fill="#2f8f3a"/><path d="M7 .3a5.700 5.700 0 0 1 5.700 5.700c-2 1-4-.500-3.500-2.500C9.500 2 8 1.500 7 .3z" fill="#2a62c9"/><path d="M1 8c3 2 8 1.500 11.500-2.500" stroke="#e8b830" stroke-width="1.800" fill="none"/><path d="M3 4l3 2" stroke="#d43a2a" stroke-width="1.500"/></svg>
<svg style="left:1057.7px;top:575.5px" width="12" height="12.8" viewBox="0 0 12 12.800"><path d="M5 0l5 1.800v4.500c0 3-2 5-5 6.200-3-1.200-5-3.200-5-6.200V1.800z" fill="#3aa3e6"/><path d="M5 0v12.500c-3-1.200-5-3.200-5-6.200V1.800z" fill="#7cc6f2"/><circle cx="8.500" cy="9.500" r="3.200" fill="#e0282e"/><path d="M7.200 8.200l2.600 2.600M9.800 8.200l-2.600 2.600" stroke="#fff" stroke-width="1"/></svg>
<svg style="left:1081.5px;top:574px" width="15" height="15" viewBox="0 0 15 15"><circle cx="6.500" cy="6.500" r="5.700" fill="none" stroke="#222" stroke-width="1.200"/><circle cx="4.600" cy="5" r=".9" fill="#222"/><circle cx="8" cy="4.600" r=".9" fill="#222"/><circle cx="5" cy="8.500" r=".9" fill="#222"/><circle cx="10.500" cy="10.300" r="3.600" fill="#eeeeee"/><circle cx="10.500" cy="10.300" r="3.100" fill="#111"/><path d="M10.500 8.600v3.400M8.800 10.300h3.400" stroke="#fff" stroke-width=".9"/></svg>
<svg style="left:1108px;top:576.5px" width="13.5" height="10.5" viewBox="0 0 13.500 10.500"><path d="M.8 3.600a8.600 8.600 0 0 1 11.900 0M2.800 5.800a5.700 5.700 0 0 1 7.900 0M4.700 7.800a3 3 0 0 1 4.100 0" fill="none" stroke="#222" stroke-width="1.100" stroke-linecap="round"/><circle cx="6.750" cy="9.400" r="1" fill="#222"/></svg>
<svg style="left:1127.4px;top:576.4px" width="13.6" height="11" viewBox="0 0 13.600 11"><path d="M.6 3.800h2.200L6 1v9L2.800 7.200H.6z" fill="none" stroke="#222" stroke-width="1" stroke-linejoin="round"/><path d="M8 3.500a3 3 0 0 1 0 4M10 2a5.200 5.200 0 0 1 0 7M12 .7a7.300 7.300 0 0 1 0 9.600" fill="none" stroke="#222" stroke-width="1" stroke-linecap="round"/></svg>
<svg style="left:1147px;top:576.4px" width="16.3" height="9.8" viewBox="0 0 16.300 9.800"><rect x=".6" y="2.200" width="14" height="7" rx="1.600" fill="#35a535" stroke="#1e5a1e" stroke-width="1.100"/><rect x="14.800" y="4.300" width="1.300" height="2.800" fill="#1e5a1e"/><path d="M7.600 0v4M5.600 3l2 2.200 2-2.200" stroke="#111" stroke-width="1.300" fill="none"/></svg>
<span class="t" style="left:52.9px;top:42.0px;font-size:6.9px;line-height:9px;color:#1d1d2b;font-weight:700;transform:scaleX(0.956);">Onezeroart LLC</span>
<span class="t" style="left:216.5px;top:21.0px;font-size:11.5px;line-height:14px;color:#ffffff;transform:scaleX(0.894);-webkit-text-stroke:0.3px #fff;">Haseeb CH | ISP CRM With Radius &amp; API</span>
<span class="t" style="left:709.5px;top:28.1px;font-size:10.6px;line-height:13px;color:#ffffff;transform:scaleX(0.984);-webkit-text-stroke:0.3px #fff;">Fri Feb 27 12:56:07 EET 2026</span>
<span class="t" style="left:889.0px;top:28.0px;font-size:10.6px;line-height:13px;color:#ffffff;transform:scaleX(1.032);-webkit-text-stroke:0.3px #fff;">Admin</span>
<span class="t" style="left:962.5px;top:28.0px;font-size:10.6px;line-height:13px;color:#ffffff;transform:scaleX(1.005);-webkit-text-stroke:0.3px #fff;">Translate</span>
<span class="t" style="left:1007.0px;top:20.3px;font-size:8px;line-height:10px;color:#ffffff;font-weight:700;">4</span>
<span class="t" style="left:1042.2px;top:19.8px;font-size:8px;line-height:10px;color:#ffffff;font-weight:700;">0</span>
<span class="t" style="left:1100.2px;top:28.0px;font-size:10.6px;line-height:13px;color:#ffffff;-webkit-text-stroke:0.3px #fff;">World call telecom LTD</span>
<span class="t" style="left:31.0px;top:63.6px;font-size:11.3px;line-height:14px;color:#2c3e50;transform:scaleX(0.929);">Home</span>
<span class="t" style="left:28.0px;top:104.1px;font-size:11.3px;line-height:14px;color:#2c3e50;transform:scaleX(0.936);">My Profile</span>
<span class="t" style="left:32.0px;top:144.6px;font-size:11.3px;line-height:14px;color:#2c3e50;transform:scaleX(0.855);">HRM</span>
<span class="t" style="left:32.0px;top:185.1px;font-size:11.3px;line-height:14px;color:#2c3e50;transform:scaleX(0.968);">Franchise</span>
<span class="t" style="left:32.0px;top:225.6px;font-size:11.3px;line-height:14px;color:#2c3e50;transform:scaleX(0.931);">Dealer</span>
<span class="t" style="left:32.0px;top:266.1px;font-size:11.3px;line-height:14px;color:#2c3e50;transform:scaleX(0.961);">Subdealer</span>
<span class="t" style="left:32.0px;top:306.6px;font-size:11.3px;line-height:14px;color:#2c3e50;transform:scaleX(0.922);">User</span>
<span class="t" style="left:30.5px;top:347.1px;font-size:11.3px;line-height:14px;color:#2c3e50;transform:scaleX(0.928);">Token</span>
<span class="t" style="left:31.0px;top:387.6px;font-size:11.3px;line-height:14px;color:#2c3e50;transform:scaleX(0.931);">Prepaid Card</span>
<span class="t" style="left:12.0px;top:427.5px;font-size:12.5px;line-height:16px;color:#2c3e50;font-weight:700;transform:scaleX(0.935);">$</span>
<span class="t" style="left:24.5px;top:428.1px;font-size:11.3px;line-height:14px;color:#2c3e50;transform:scaleX(1.011);">Accounting</span>
<span class="t" style="left:32.0px;top:468.6px;font-size:11.3px;line-height:14px;color:#2c3e50;transform:scaleX(0.927);">Packages</span>
<span class="t" style="left:30.0px;top:509.1px;font-size:11.3px;line-height:14px;color:#2c3e50;transform:scaleX(0.929);">Policy</span>
<span class="t" style="left:32.0px;top:549.6px;font-size:11.3px;line-height:14px;color:#2c3e50;transform:scaleX(0.989);">Network</span>
<span class="t" style="left:188.8px;top:110.1px;font-size:11.8px;line-height:15px;color:#3b4a5c;transform:scaleX(1.035);">My Profile</span>
<span class="t" style="left:283.9px;top:110.1px;font-size:11.8px;line-height:15px;color:#3b4a5c;transform:scaleX(1.035);">User Balance</span>
<span class="t" style="left:397.9px;top:110.1px;font-size:11.8px;line-height:15px;color:#3b4a5c;transform:scaleX(1.034);">Reseller Balance</span>
<span class="t" style="left:531.0px;top:110.1px;font-size:11.8px;line-height:15px;color:#3b4a5c;transform:scaleX(1.039);">Add New User</span>
<span class="t" style="left:650.0px;top:110.1px;font-size:11.8px;line-height:15px;color:#3b4a5c;transform:scaleX(1.081);">Import Users</span>
<span class="t" style="left:763.2px;top:110.1px;font-size:11.8px;line-height:15px;color:#3b4a5c;transform:scaleX(1.063);">Export Users</span>
<span class="t" style="left:876.0px;top:110.1px;font-size:11.8px;line-height:15px;color:#3b4a5c;transform:scaleX(1.109);">Active/Renew</span>
<span class="t" style="left:996.5px;top:110.1px;font-size:11.8px;line-height:15px;color:#3b4a5c;transform:scaleX(1.070);">Add Invoice</span>
<span class="t" style="left:1103.0px;top:110.1px;font-size:11.8px;line-height:15px;color:#3b4a5c;transform:scaleX(1.011);">Send SMS</span>
<span class="t" style="left:253.5px;top:200.5px;font-size:11.6px;line-height:14px;color:#454d57;transform:scaleX(0.951);">Select Profile Ty…</span>
<span class="t" style="left:406.0px;top:200.5px;font-size:11.6px;line-height:14px;color:#454d57;transform:scaleX(1.015);">Select an Option</span>
<span class="t" style="left:559.5px;top:198.6px;font-size:11.6px;line-height:14px;color:#ffffff;-webkit-text-stroke:0.3px #fff;">View Profile</span>
<span class="t" style="left:781.7px;top:199.4px;font-size:11.6px;line-height:14px;color:#454d57;transform:scaleX(0.981);">Token Type</span>
<span class="t" style="left:931.8px;top:199.4px;font-size:11.6px;line-height:14px;color:#9aa0a6;transform:scaleX(1.005);">Token Secret</span>
<span class="t" style="left:1084.6px;top:198.8px;font-size:11.6px;line-height:14px;color:#ffffff;transform:scaleX(1.065);-webkit-text-stroke:0.3px #fff;">Status</span>
<span class="t" style="left:187.0px;top:279.0px;font-size:15.5px;line-height:19px;color:#62748e;transform:scaleX(0.987);">Reports &amp; Statistics</span>
<span class="t" style="left:225.0px;top:354.0px;font-size:11px;line-height:14px;color:#4a4f55;transform:scaleX(0.955);">User</span>
<span class="t" style="left:274.0px;top:352.2px;font-size:14.5px;line-height:18px;color:#ffffff;font-weight:700;transform:scaleX(0.891);">$</span>
<span class="t" style="left:286.5px;top:354.0px;font-size:11px;line-height:14px;color:#ffffff;transform:scaleX(1.047);-webkit-text-stroke:0.3px #fff;">Accounting</span>
<span class="t" style="left:391.0px;top:354.0px;font-size:11px;line-height:14px;color:#ffffff;transform:scaleX(1.034);-webkit-text-stroke:0.3px #fff;">Admin/Staff/Reseller</span>
<span class="t" style="left:539.0px;top:354.0px;font-size:11px;line-height:14px;color:#ffffff;-webkit-text-stroke:0.3px #fff;">Package/NAS/Area</span>
<span class="t" style="left:675.5px;top:354.0px;font-size:11px;line-height:14px;color:#ffffff;transform:scaleX(1.052);-webkit-text-stroke:0.3px #fff;">Notice/Ticket/Policy</span>
<span class="t" style="left:823.5px;top:354.0px;font-size:11px;line-height:14px;color:#ffffff;transform:scaleX(0.959);-webkit-text-stroke:0.3px #fff;">Usage</span>
<span class="t" style="left:895.5px;top:354.0px;font-size:11px;line-height:14px;color:#ffffff;transform:scaleX(0.958);-webkit-text-stroke:0.3px #fff;">Map</span>
<span class="t" style="left:196.0px;top:392.0px;font-size:11px;line-height:14px;color:#5a6e8c;font-weight:700;transform:scaleX(0.964);">All Users</span>
<span class="t" style="left:223.4px;top:423.9px;font-size:11.5px;line-height:14px;color:#6c7b8d;">Users</span>
<span class="t" style="left:403.3px;top:423.7px;font-size:12.8px;line-height:16px;color:#555;font-weight:700;transform:scaleX(1.076);">0.00/100.00%</span>
<span class="t" style="left:220.7px;top:463.3px;font-size:11.5px;line-height:14px;color:#6c7b8d;transform:scaleX(1.053);">Active</span>
<span class="t" style="left:417.6px;top:463.1px;font-size:12.8px;line-height:16px;color:#555;font-weight:700;transform:scaleX(1.092);">0.00/0.00%</span>
<span class="t" style="left:223.4px;top:502.9px;font-size:11.5px;line-height:14px;color:#6c7b8d;transform:scaleX(0.992);">Online</span>
<span class="t" style="left:417.6px;top:502.7px;font-size:12.8px;line-height:16px;color:#555;font-weight:700;transform:scaleX(1.092);">0.00/0.00%</span>
<span class="t" style="left:223.4px;top:542.5px;font-size:11.5px;line-height:14px;color:#6c7b8d;transform:scaleX(0.994);">Expired Online</span>
<span class="t" style="left:417.6px;top:542.3px;font-size:12.8px;line-height:16px;color:#555;font-weight:700;transform:scaleX(1.092);">0.00/0.00%</span>
<span class="t" style="left:538.0px;top:392.0px;font-size:11px;line-height:14px;color:#5a6e8c;font-weight:700;transform:scaleX(0.967);">Radius Users</span>
<span class="t" style="left:565.4px;top:423.9px;font-size:11.5px;line-height:14px;color:#6c7b8d;">Users</span>
<span class="t" style="left:759.6px;top:423.7px;font-size:12.8px;line-height:16px;color:#555;font-weight:700;transform:scaleX(1.092);">0.00/0.00%</span>
<span class="t" style="left:562.7px;top:463.3px;font-size:11.5px;line-height:14px;color:#6c7b8d;transform:scaleX(1.053);">Active</span>
<span class="t" style="left:759.6px;top:463.1px;font-size:12.8px;line-height:16px;color:#555;font-weight:700;transform:scaleX(1.092);">0.00/0.00%</span>
<span class="t" style="left:565.4px;top:502.9px;font-size:11.5px;line-height:14px;color:#6c7b8d;transform:scaleX(0.992);">Online</span>
<span class="t" style="left:759.6px;top:502.7px;font-size:12.8px;line-height:16px;color:#555;font-weight:700;transform:scaleX(1.092);">0.00/0.00%</span>
<span class="t" style="left:565.4px;top:542.5px;font-size:11.5px;line-height:14px;color:#6c7b8d;transform:scaleX(0.994);">Expired Online</span>
<span class="t" style="left:759.6px;top:542.3px;font-size:12.8px;line-height:16px;color:#555;font-weight:700;transform:scaleX(1.092);">0.00/0.00%</span>
<span class="t" style="left:880.0px;top:392.0px;font-size:11px;line-height:14px;color:#5a6e8c;font-weight:700;transform:scaleX(0.971);">API Users</span>
<span class="t" style="left:907.4px;top:423.9px;font-size:11.5px;line-height:14px;color:#6c7b8d;">Users</span>
<span class="t" style="left:1087.3px;top:423.7px;font-size:12.8px;line-height:16px;color:#555;font-weight:700;transform:scaleX(1.076);">0.00/100.00%</span>
<span class="t" style="left:904.7px;top:463.3px;font-size:11.5px;line-height:14px;color:#6c7b8d;transform:scaleX(1.053);">Active</span>
<span class="t" style="left:1101.6px;top:463.1px;font-size:12.8px;line-height:16px;color:#555;font-weight:700;transform:scaleX(1.092);">0.00/0.00%</span>
<span class="t" style="left:904.0px;top:502.9px;font-size:11.5px;line-height:14px;color:#6c7b8d;transform:scaleX(1.025);">Registered</span>
<span class="t" style="left:1121.3px;top:502.7px;font-size:12.8px;line-height:16px;color:#555;font-weight:700;transform:scaleX(1.086);">0/0.00%</span>
<span class="t" style="left:907.4px;top:542.5px;font-size:11.5px;line-height:14px;color:#6c7b8d;transform:scaleX(0.991);">Disable</span>
<span class="t" style="left:1101.6px;top:542.3px;font-size:12.8px;line-height:16px;color:#555;font-weight:700;transform:scaleX(1.092);">0.00/0.00%</span>
<span class="t" style="left:185.6px;top:567.9px;font-size:10px;line-height:12px;color:#333;transform:scaleX(0.950);">D-S : 6.05Mbps</span>
<span class="t" style="left:185.6px;top:583.5px;font-size:10px;line-height:12px;color:#333;transform:scaleX(0.931);">U-S : 53.27Kbps</span>
<span class="t" style="left:953.3px;top:575.2px;font-size:11px;line-height:14px;color:#0a1a0a;font-weight:700;transform:scaleX(0.980);">37</span>
<span class="t" style="left:1192.0px;top:568.0px;font-size:11px;line-height:14px;color:#222;transform:scaleX(0.863);">3:56 pm</span>
<span class="t" style="left:1176.6px;top:581.0px;font-size:11px;line-height:14px;color:#222;transform:scaleX(0.903);">27/02/2026</span>
</body></html>
